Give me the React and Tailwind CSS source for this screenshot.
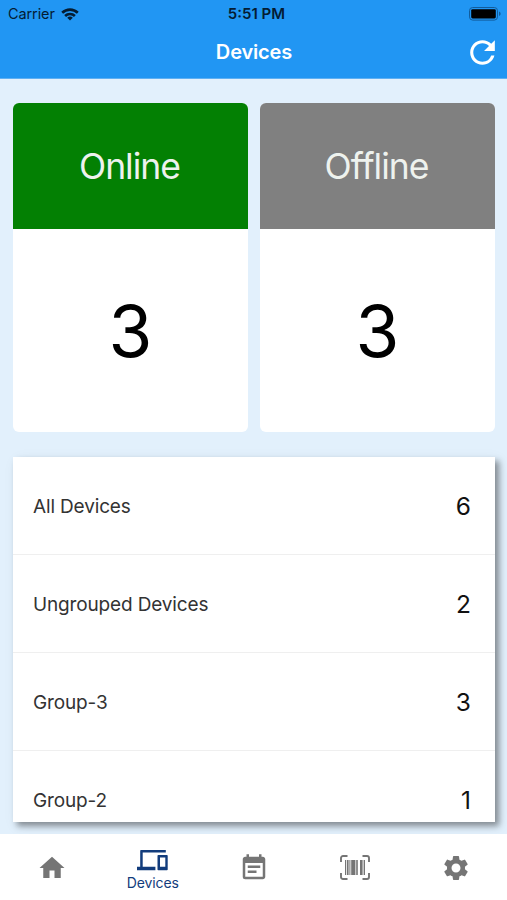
import React from 'react';
import { MdHome, MdEventNote, MdSettings, MdRefresh } from 'react-icons/md';

const groups = [
  { name: 'All Devices', count: 6 },
  { name: 'Ungrouped Devices', count: 2 },
  { name: 'Group-3', count: 3 },
  { name: 'Group-2', count: 1 },
];

const WifiIcon = () => (
  <svg viewBox="0 0 18 13" className="w-[18px] h-[13px]" fill="none" stroke="#041c33" strokeWidth="2.6">
    <path d="M1.2 4.8a11.2 11.2 0 0 1 15.6 0" />
    <path d="M4.1 8a7 7 0 0 1 9.8 0" />
    <path d="M9 12.6 6.2 9.8a4 4 0 0 1 5.6 0z" fill="#041c33" stroke="none" />
  </svg>
);

const BatteryIcon = () => (
  <svg viewBox="0 0 32 14" className="w-8 h-3.5">
    <rect x="0.5" y="0.5" width="28" height="12.6" rx="3.2" fill="none" stroke="#125c9b" />
    <rect x="2.2" y="2.2" width="24.6" height="9.2" rx="1.4" fill="#000" />
    <path d="M30 4.6v4.4c1.3-.5 1.6-1.2 1.6-2.2s-.3-1.7-1.6-2.2z" fill="#125c9b" />
  </svg>
);

const DevicesIcon = () => (
  <svg viewBox="0 0 31 21" className="w-[31px] h-[21px]" fill="currentColor">
    <path d="M3.2.8A.8.8 0 0 1 4 0h24.8v2.4H5.7v14.4h12.7v3.4H0v-3.4h3.2z" />
    <path
      fillRule="evenodd"
      d="M21.3 4.9h8.6a.8.8 0 0 1 .8.8v13.700a.8.8 0 0 1-.8.8h-8.6a.8.8 0 0 1-.8-.8V5.7a.8.8 0 0 1 .8-.8zM23 7.4v9.4h5.3V7.4z"
    />
  </svg>
);

const BarcodeIcon = () => (
  <svg viewBox="0 0 30 25" className="w-[30px] h-[25px]">
    <path
      d="M1 7V3a2 2 0 0 1 2-2h4.5M22.5 1H27a2 2 0 0 1 2 2v4M29 18v4a2 2 0 0 1-2 2h-4.5M7.5 24H3a2 2 0 0 1-2-2v-4"
      fill="none"
      stroke="#757575"
      strokeWidth="1.9"
    />
    <g fill="#757575">
      <rect x="5" y="5" width="1.2" height="15" />
      <rect x="7" y="5" width="1.6" height="15" />
      <rect x="9.4" y="5" width="1" height="15" />
      <rect x="11.2" y="5" width="4.2" height="15" />
      <rect x="16.2" y="5" width="1.6" height="15" />
      <rect x="20" y="5" width="2.6" height="15" />
      <rect x="23.6" y="5" width="1.4" height="15" />
    </g>
  </svg>
);

const StatusCard = ({ label, count, headerClass }) => (
  <div className="flex-1 h-[329px] bg-white rounded-[6px] overflow-hidden flex flex-col">
    <div className={`h-[126px] flex items-center justify-center text-[#eef2ee] ${headerClass}`}>
      <span className="pt-0.5 pr-0.5 text-[35.5px] tracking-[-1px]">{label}</span>
    </div>
    <div className="flex-1 flex items-center justify-center pt-0.5">
      <span className="text-[71px] leading-none text-black">{count}</span>
    </div>
  </div>
);

const App = () => {
  return (
    <div className="w-[507px] h-[900px] flex flex-col overflow-hidden bg-[#e2f0fc] font-['Inter',sans-serif]">
      <header className="h-[79px] shrink-0 bg-[#2196f3] border-b border-[#5fb0f3]">
        <div className="h-[27px] grid grid-cols-3 items-center pl-2 pr-1.5 text-[#041c33]">
          <div className="flex items-center gap-[6px] pt-px">
            <span className="text-[14.5px] tracking-[-0.1px]">Carrier</span>
            <WifiIcon />
          </div>
          <span className="pt-0.5 pl-1 text-center text-[15px] font-semibold">5:51 PM</span>
          <div className="flex justify-end">
            <BatteryIcon />
          </div>
        </div>
        <div className="h-[50px] grid grid-cols-3 items-center px-1.5">
          <span />
          <h1 className="text-center text-[20px] tracking-[-0.15px] font-semibold text-white pl-px">Devices</h1>
          <button className="justify-self-end text-white">
            <MdRefresh className="size-[37px]" />
          </button>
        </div>
      </header>

      <main className="flex-1 min-h-0 overflow-hidden pt-6 pl-[13px] pr-3">
        <div className="flex gap-3">
          <StatusCard label="Online" count={3} headerClass="bg-[#038003]" />
          <StatusCard label="Offline" count={3} headerClass="bg-[#808080]" />
        </div>

        <ul className="mt-[25px] h-[365px] overflow-hidden bg-white shadow-[4px_4px_6px_rgba(0,0,0,0.38),4px_4px_14px_rgba(0,0,0,0.08)]">
          {groups.map((g) => (
            <li key={g.name} className="h-[98px] border-b border-[#efefef] flex items-center justify-between pt-px pl-5 pr-6">
              <span className="pt-0.5 text-[19px] tracking-[-0.15px] text-[#333]">{g.name}</span>
              <span className="pt-px text-[24.5px] text-[#111]">{g.count}</span>
            </li>
          ))}
        </ul>
      </main>

      <nav className="h-[66px] shrink-0 bg-white grid grid-cols-5 items-center pl-px pt-0.5 text-[#757575]">
        <MdHome className="size-[30px] justify-self-center" />
        <div className="flex flex-col items-center gap-1 pt-1 text-[#123c7c]">
          <DevicesIcon />
          <span className="text-[14px] leading-4 tracking-[-0.1px]">Devices</span>
        </div>
        <MdEventNote className="size-[30px] justify-self-center" />
        <div className="justify-self-center pb-px">
          <BarcodeIcon />
        </div>
        <MdSettings className="size-[30px] justify-self-center" />
      </nav>
    </div>
  );
};

export default App;
